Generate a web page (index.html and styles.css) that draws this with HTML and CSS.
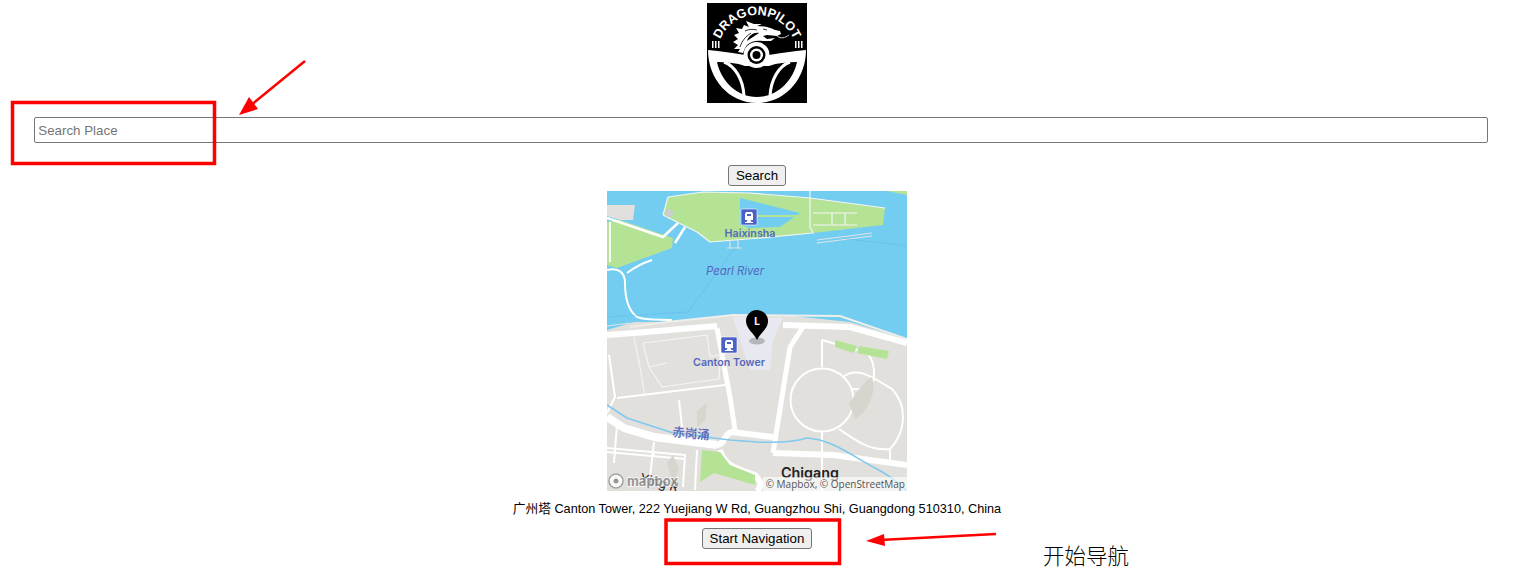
FILE: index.html
```html
<!DOCTYPE html>
<html lang="en">
<head>
  <meta charset="UTF-8" />
  <title>dragonpilot navigation</title>
  <link rel="stylesheet" href="styles.css">
</head>
<body>

  <svg class="logo" viewBox="0 0 100 100" role="img" aria-label="dragonpilot logo">
    <rect width="100" height="100" fill="#000"/>
    <defs>
      <path id="logoArc" d="M10 52 A40 40 0 0 1 90 52"/>
    </defs>
    <text class="logo-text"><textPath href="#logoArc" startOffset="50%" text-anchor="middle">DRAGONPILOT</textPath></text>
    <path fill="#fff" d="M5 38h1.500v7h-1.500zM8 38h1.500v7h-1.500zM11 38h1.500v7h-1.500zM88 38h1.500v7h-1.500zM91 38h1.500v7h-1.500zM94 38h1.500v7h-1.500z"/>

    <!-- wheel -->
    <path fill="#fff" d="M1 47 C14 48 26 50 38 52 L62 52 C74 50 86 48 99 47 C99 76 78 100 50 100 C22 100 1 76 1 47Z"/>
    <path fill="#000" d="M10 59 C20 59 30 60 38 63 L62 63 C70 60 80 59 90 59 C86 78 70 94 50 94 C30 94 14 78 10 59Z"/>
    <path class="logo-spoke" d="M17 59 C28 63 36 76 37 93M83 59 C72 63 64 76 63 93"/>
    <circle cx="49.500" cy="52" r="13" fill="#fff"/>
    <circle cx="49.500" cy="52" r="9" fill="#000"/>
    <circle cx="49.500" cy="52" r="6.500" fill="#fff"/>
    <circle cx="49.500" cy="52" r="4" fill="#000"/>

    <!-- dragon -->
    <path fill="#fff" d="M36 50 L31 49 L33 46 L27 46 L31 42 L26 39 L31 36 L27 32 L32 30 L29 25 L35 26 L37 22 L42 24 L39 18 L47 21 L55 21 L50 23 C58 23 64 25 68 27 L73 28 L74 31 L70 33 L60 32 L56 33 L60 36 L68 35 L64 38 L56 38 C50 37 44 38 40 42 C38 45 37 47 36 50Z"/>
    <path fill="#000" d="M40 38 C42 32 47 29 52 30 C48 33 44 35 40 38Z"/>
    <path class="logo-cut" d="M33 44 C35 38 38 34 44 30M38 28 C42 26 46 26 50 27M56 26 l4 1"/>
    <path class="logo-thin" d="M70 33 C74 36 78 35 82 32"/>
  </svg>

  <input class="search-input" type="text" placeholder="Search Place">
  <button class="btn search-btn" type="button">Search</button>

  <svg class="map" viewBox="0 0 300 300" role="img" aria-label="map of Canton Tower">
    <rect class="land" width="300" height="300"/>
    <!-- river -->
    <path class="water" d="M0 0H300V148L243 131 176 124 126 124 60 131 27 131 0 139Z"/>
    <path class="land" d="M0 14H28L26 29H13L0 25Z"/>

    <!-- islands -->
    <path class="park" d="M56 24 61 6 96 1 143 2 203 7 278 17 276 34 206 42 153 47 103 51 90 41Z"/>
    <path class="water" d="M133 7 193 22 173 36 143 37 133 34Z"/>
    <path class="park" d="M150 24H193V26H150Z"/>
    <path class="park" d="M13 29 66 47 65 57 10 77 0 74V31Z"/>
    <path class="park" d="M280 0 300 4V0Z"/>
    <path class="road-thin" d="M56 24 61 6 96 1 143 2 203 7 278 17M203 0V36L206 42 153 47 103 51 90 41 56 24M206 22H250M206 34H250M225 22V34M238 22V34"/>
    <path class="road" stroke-width="2.500" d="M0 27 56 46 71 32M68 52 78 36"/>
    <path class="road" stroke-width="2" d="M3 31V71M0 79C12 76 18 82 18 92 18 108 22 120 30 126 40 130 55 128 65 129M20 82C28 76 36 72 45 69"/>
    <path class="pale" d="M123 49V57M131 49V57M120 57H135M210 49 265 42M210 52 265 45M0 135 23 132"/>
    <circle cx="62" cy="22" r="4" fill="#ccc"/>
    <path class="channel" d="M128 57 81 121 0 126M240 48 300 55"/>

    <!-- shore and roads -->
    <path class="shore" d="M23 136 60 131 126 124 233 125 300 148"/>
    <path class="road" stroke-width="6" d="M0 144 27 142 110 135M176 134 243 136 300 152"/>
    <path class="plaza" d="M126 126 176 127 166 149 163 179H143L133 149Z"/>
    <path class="road" stroke-width="5" d="M110 137 123 206 128 239M183 156 166 262M196 136 183 156"/>
    <path class="road" stroke-width="8" d="M0 226 17 237 47 246 110 254"/>
    <path class="road" stroke-width="6" d="M110 254C118 254 116 243 125 241L166 246M166 262 226 264 300 274M113 259C116 272 124 276 148 284 156 292 154 296 150 300"/>
    <path class="road" stroke-width="2" d="M2 164 8 206 0 222M10 207 118 194M72 209 75 236M215 149V176"/>
    <path class="road-thin" d="M27 146 33 176 38 206M36 152 100 144 103 166 113 164M36 152 42 176 60 172M42 176 55 196 112 188 113 164"/>
    <path class="road" stroke-width="2" d="M10 234 7 272M47 251 43 286M0 257 78 264 76 296M0 261 78 268M90 259 88 299"/>
    <circle cx="46" cy="264" r="2" fill="#fff"/>
    <circle cx="215" cy="209" r="31.500" fill="none" stroke="#fff" stroke-width="2"/>
    <path class="road" stroke-width="2" d="M236 186C250 174 268 188 285 198 300 214 300 240 283 258 262 260 250 250 232 238M215 149 260 162C268 170 270 190 262 195 254 200 250 198 246 198"/>
    <path class="road" stroke-width="2" d="M283 258V274M215 240V264M215 264V300"/>
    <path class="stream" d="M0 214 20 227 63 241 107 247 123 249 150 251C170 252 190 250 200 247 225 248 250 268 270 278 285 286 295 295 300 300"/>
    <path class="park" d="M95 259 93 291 107 282 148 294 148 284 123 274 113 261Z"/>
    <path class="park" d="M228 149 250 155 247 162 228 156ZM252 155 282 160 280 168 250 162Z"/>
    <path class="hill" d="M242 213C250 200 258 190 265 186 270 200 262 220 248 228Z"/>
    <path class="hill" d="M90 220 100 212 98 230 90 236Z"/>
    <path class="hill" d="M60 272 66 264 72 278 66 292Z"/>

    <!-- stations -->
    <g transform="translate(134 18)">
      <rect class="station" width="16" height="16" rx="1"/>
      <path class="station-glyph" d="M5 3h6l1 2v6H4V5zM6 5v2h4V5zM4 13h1.500l1-2h3l1 2H12v1H4z"/>
    </g>
    <g transform="translate(114 146)">
      <rect class="station" width="16" height="16" rx="1"/>
      <path class="station-glyph" d="M5 3h6l1 2v6H4V5zM6 5v2h4V5zM4 13h1.500l1-2h3l1 2H12v1H4z"/>
    </g>

    <!-- labels -->
    <text class="map-label" x="143" y="46">Haixinsha</text>
    <text class="map-label river" x="128" y="84">Pearl River</text>
    <text class="map-label" x="122" y="175">Canton Tower</text>
    <text class="map-label creek" x="84" y="247" transform="rotate(5 84 243)">赤岗涌</text>
    <text class="street" x="32" y="291" transform="rotate(15 32 291)">Ying R</text>
    <text class="town" x="203" y="287">Chigang</text>

    <!-- pin -->
    <ellipse cx="150" cy="150" rx="8" ry="3.500" fill="#777" opacity=".45"/>
    <path d="M150 149C147 142 139 138 139 130A11 11 0 0 1 161 130C161 138 153 142 150 149Z" fill="#000"/>
    <text class="pin-label" x="150" y="134">L</text>

    <!-- attribution -->
    <rect x="156" y="286" width="144" height="14" fill="#fff" opacity=".6"/>
    <text class="attribution" x="298" y="297">© Mapbox, © OpenStreetMap</text>
    <circle cx="9" cy="290" r="7" fill="#fff" opacity=".85" stroke="#999" stroke-width="1.500"/>
    <circle cx="9" cy="290" r="2.500" fill="#999"/>
    <text class="map-logo" x="20" y="295">mapbox</text>
  </svg>

  <p class="address">广州塔 Canton Tower, 222 Yuejiang W Rd, Guangzhou Shi, Guangdong 510310, China</p>
  <button class="btn nav-btn" type="button">Start Navigation</button>

  <!-- red notes drawn over the page -->
  <svg class="notes" viewBox="0 0 1514 585">
    <rect class="note-box" x="12.500" y="102.500" width="202" height="61"/>
    <path class="note-line" d="M305 61 250 106"/>
    <path class="note-head" d="M239 115 249 97 258 109Z"/>
    <rect class="note-box" x="666" y="520" width="173.500" height="43.500"/>
    <path class="note-line" d="M996 534 880 540"/>
    <path class="note-head" d="M866 541 884 534 885 546Z"/>
  </svg>
  <div class="note-text">开始导航</div>

</body>
</html>
```

FILE: styles.css
```css
body {
  margin: 0;
  font-family: "Liberation Sans", Arial, "Noto Sans CJK SC", sans-serif;
  background: #ffffff;
  display: flex;
  flex-direction: column;
  align-items: center;
}

.logo {
  display: block;
  width: 100px;
  height: 100px;
  margin-top: 3px;
}

.logo-text {
  font-family: "Liberation Sans", sans-serif;
  font-size: 12.600px;
  font-weight: bold;
  fill: #ffffff;
}

.logo-spoke,
.logo-thin,
.logo-cut {
  fill: none;
}

.logo-spoke { stroke: #ffffff; stroke-width: 3; }
.logo-thin { stroke: #ffffff; stroke-width: 0.8; }
.logo-cut { stroke: #000000; stroke-width: 0.8; }

.search-input {
  width: 96%;
  height: 26px;
  margin: 14px 0 0 8px;
  padding: 1px 3px;
  border: 1px solid #767676;
  border-radius: 2px;
  box-sizing: border-box;
  font-family: "Liberation Sans", Arial, sans-serif;
  font-size: 13.333px;
}

.btn {
  height: 21px;
  padding: 1px 7px;
  border: 1px solid #767676;
  border-radius: 3px;
  background: #efefef;
  box-sizing: border-box;
  font-family: "Liberation Sans", Arial, sans-serif;
  font-size: 13.333px;
  color: #000000;
}

.search-btn {
  margin-top: 22px;
}

.map {
  display: block;
  width: 300px;
  height: 300px;
  margin-top: 5px;
}

.land { fill: #e2e0dc; }
.water { fill: #72cdf1; }
.park { fill: #b4e396; }
.plaza { fill: #e8e9f0; }
.hill { fill: #d8d5cf; }
.station { fill: #4a62c8; stroke: #ffffff; stroke-width: 0.6; }
.station-glyph { fill: #ffffff; fill-rule: evenodd; }

.road,
.road-thin,
.pale,
.shore,
.channel,
.stream {
  fill: none;
  stroke-linejoin: round;
}

.road { stroke: #ffffff; }
.road-thin { stroke: #f4f4f6; stroke-width: 1.200; }
.pale { stroke: #dfe3e6; stroke-width: 1.200; }
.shore { stroke: #eeeeea; stroke-width: 2; }
.channel { stroke: #5fb0dc; stroke-width: 0.6; stroke-dasharray: 2 1; }
.stream { stroke: #7fc8ee; stroke-width: 1.500; }

.map-label {
  font-family: "Inter", "Noto Sans CJK SC", sans-serif;
  font-size: 10.700px;
  font-weight: 600;
  text-anchor: middle;
  fill: #5468bd;
}

.river {
  font-size: 11.300px;
  font-style: italic;
  font-weight: 400;
}

.creek {
  font-size: 12.500px;
  font-weight: 500;
}

.street {
  font-family: "Inter", sans-serif;
  font-size: 13px;
  fill: #222222;
}

.town {
  font-family: "Inter", sans-serif;
  font-size: 14.300px;
  font-weight: 600;
  text-anchor: middle;
  fill: #222222;
}

.pin-label {
  font-family: "Inter", sans-serif;
  font-size: 10px;
  font-weight: bold;
  text-anchor: middle;
  fill: #ffffff;
}

.attribution {
  font-family: "Open Sans", sans-serif;
  font-size: 10px;
  text-anchor: end;
  fill: #555555;
}

.map-logo {
  font-family: "Inter", sans-serif;
  font-size: 13px;
  font-weight: 700;
  fill: #8a8a8a;
  stroke: #ffffff;
  stroke-width: 1.500;
  paint-order: stroke;
  opacity: 0.85;
}

.address {
  margin: 11px 0 0;
  font-size: 12.700px;
  line-height: 15px;
  color: #000000;
}

.nav-btn {
  margin-top: 11px;
}

.notes {
  position: absolute;
  top: 0;
  left: 0;
  width: 1514px;
  height: 585px;
  pointer-events: none;
}

.note-box {
  fill: none;
  stroke: #ff0000;
  stroke-width: 3.500;
}

.note-line {
  fill: none;
  stroke: #ff0000;
  stroke-width: 2.500;
}

.note-head {
  fill: #ff0000;
}

.note-text {
  position: absolute;
  top: 541px;
  left: 1043px;
  font-family: "Noto Sans CJK SC", sans-serif;
  font-size: 21.500px;
  font-weight: 300;
  line-height: 28px;
  color: #000000;
}
```
